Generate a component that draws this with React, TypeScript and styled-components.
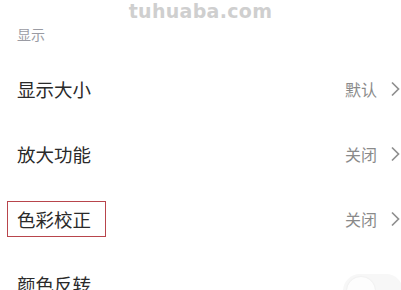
import React from "react";
import styled, { createGlobalStyle } from "styled-components";

const GlobalStyle = createGlobalStyle`
  html, body {
    margin: 0;
    padding: 0;
    background: #fff;
    overflow: hidden;
  }
  body {
    font-family: "Noto Sans CJK SC", "Noto Sans", sans-serif;
  }
`;

const Page = styled.div`
  width: 401px;
  height: 290px;
  overflow: hidden;
  background: #fff;
`;

const Watermark = styled.div`
  height: 24px;
  line-height: 22px;
  text-align: center;
  font-family: "DejaVu Sans", "Open Sans", sans-serif;
  font-weight: 700;
  font-size: 19px;
  letter-spacing: 0.3px;
  color: #cfcfcf;
`;

const SectionHeader = styled.div`
  height: 20px;
  line-height: 20px;
  padding-left: 17px;
  margin-bottom: 12px;
  font-size: 14px;
  color: #9a9ba3;
`;

const Row = styled.div`
  height: 65px;
  display: flex;
  align-items: center;
  justify-content: space-between;
  padding: 0 1px 0 7px;
`;

const Title = styled.div<{ $marked?: boolean }>`
  padding: 7px 14px 7px 9px;
  border: 1px solid ${(p) => (p.$marked ? "#b8454c" : "transparent")};
  font-size: 18.5px;
  line-height: 20px;
  color: #2a2a2a;
`;

const Trail = styled.div`
  display: flex;
  align-items: center;
  gap: 14px;
`;

const Value = styled.span`
  font-size: 16px;
  color: #8a8a8a;
`;

const Chevron = () => (
  <svg width="9" height="16" viewBox="0 0 9 16">
    <path d="M1 1.5 L7.5 8 L1 14.5" fill="none" stroke="#8f8f8f" strokeWidth="1.7" />
  </svg>
);

const Toggle = styled.div`
  width: 60px;
  height: 34px;
  border-radius: 17px;
  background: #f7f7f7;
  margin-right: -3px;
  margin-top: 14px;
  display: flex;
  align-items: center;
  padding-left: 4px;
  box-sizing: border-box;
`;

const Knob = styled.div`
  width: 28px;
  height: 28px;
  border-radius: 50%;
  background: #fdfdfd;
  box-shadow: 0 0 2px rgba(0, 0, 0, 0.08);
`;

const items = [
  { title: "显示大小", value: "默认" },
  { title: "放大功能", value: "关闭" },
  { title: "色彩校正", value: "关闭", marked: true },
];

export default function App() {
  return (
    <Page>
      <GlobalStyle />
      <Watermark>tuhuaba.com</Watermark>
      <SectionHeader>显示</SectionHeader>
      {items.map((it) => (
        <Row key={it.title}>
          <Title $marked={it.marked}>{it.title}</Title>
          <Trail>
            <Value>{it.value}</Value>
            <Chevron />
          </Trail>
        </Row>
      ))}
      <Row>
        <Title>颜色反转</Title>
        <Toggle>
          <Knob />
        </Toggle>
      </Row>
    </Page>
  );
}
